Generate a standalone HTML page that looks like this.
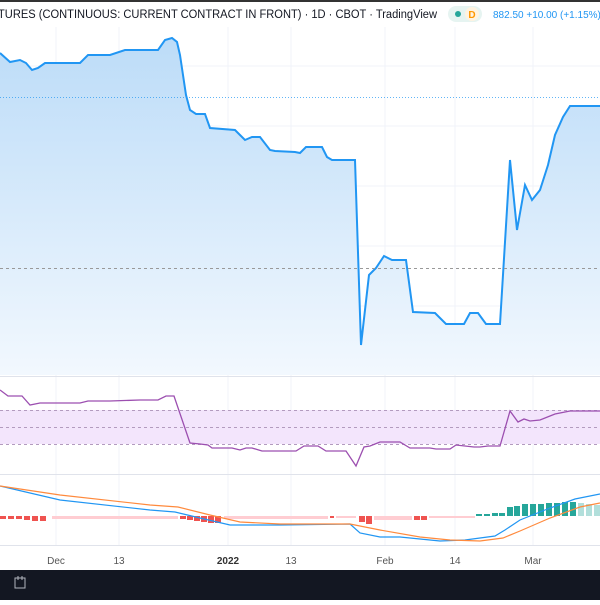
<!DOCTYPE html>
<html><head><meta charset="utf-8"><style>
body{margin:0;width:600px;height:600px;overflow:hidden;background:#fff;font-family:"Liberation Sans",sans-serif}
</style></head><body>
<svg width="600" height="600" xmlns="http://www.w3.org/2000/svg" font-family="Liberation Sans, sans-serif">
<defs><linearGradient id="g" x1="0" y1="0" x2="0" y2="1">
<stop offset="0" stop-color="#bcdcf8"/><stop offset="1" stop-color="#f2f8fe"/></linearGradient></defs>
<rect width="600" height="600" fill="#fff"/>
<rect width="600" height="2" fill="#333"/>
<g stroke="#f0f3fa" stroke-width="1">
<line x1="56" y1="27" x2="56" y2="545"/><line x1="119" y1="27" x2="119" y2="545"/><line x1="228" y1="27" x2="228" y2="545"/><line x1="291" y1="27" x2="291" y2="545"/><line x1="385" y1="27" x2="385" y2="545"/><line x1="455" y1="27" x2="455" y2="545"/><line x1="533" y1="27" x2="533" y2="545"/>
<line x1="0" y1="66" x2="600" y2="66"/><line x1="0" y1="126" x2="600" y2="126"/><line x1="0" y1="186" x2="600" y2="186"/><line x1="0" y1="246" x2="600" y2="246"/><line x1="0" y1="306" x2="600" y2="306"/>
</g>
<path d="M0,53 L10,62 L20,60 L26,63 L32,70 L38,68 L45,63 L80,63 L88,55 L110,55 L125,50 L158,50 L165,40 L172,38 L177,42 L180,55 L186,95 L190,110 L196,114 L205,114 L210,128 L235,130 L240,135 L245,140 L252,137 L260,137 L270,150 L275,151 L295,152 L300,153 L306,147 L322,147 L327,157 L332,160 L355,160 L361,345 L369,275 L376,268 L384,256 L392,260 L406,260 L413,312 L435,313 L440,318 L446,324 L464,324 L470,313 L478,313 L486,324 L500,324 L510,160 L517,230 L525,185 L532,200 L540,190 L548,165 L555,135 L563,117 L570,106 L600,106 L600,375 L0,375 Z" fill="url(#g)"/>
<path d="M0,53 L10,62 L20,60 L26,63 L32,70 L38,68 L45,63 L80,63 L88,55 L110,55 L125,50 L158,50 L165,40 L172,38 L177,42 L180,55 L186,95 L190,110 L196,114 L205,114 L210,128 L235,130 L240,135 L245,140 L252,137 L260,137 L270,150 L275,151 L295,152 L300,153 L306,147 L322,147 L327,157 L332,160 L355,160 L361,345 L369,275 L376,268 L384,256 L392,260 L406,260 L413,312 L435,313 L440,318 L446,324 L464,324 L470,313 L478,313 L486,324 L500,324 L510,160 L517,230 L525,185 L532,200 L540,190 L548,165 L555,135 L563,117 L570,106 L600,106" fill="none" stroke="#2196f3" stroke-width="2"/>
<line x1="0" y1="97.5" x2="600" y2="97.5" stroke="#2196f3" stroke-width="1" stroke-dasharray="1,2" opacity="0.7"/>
<line x1="0" y1="268.5" x2="600" y2="268.5" stroke="#999" stroke-width="1" stroke-dasharray="3,3"/>
<rect x="0" y="376" width="600" height="1" fill="#e0e3eb"/>
<rect x="0" y="410" width="600" height="34" fill="#f3e5fc"/>
<g stroke="#b39bbf" stroke-dasharray="3,3" stroke-width="1"><line x1="0" y1="410.5" x2="600" y2="410.5"/><line x1="0" y1="427.5" x2="600" y2="427.5"/><line x1="0" y1="444.5" x2="600" y2="444.5"/></g>
<path d="M0,390 L8,396 L22,396 L30,405 L40,403 L80,403 L88,401 L110,401 L140,400 L158,400 L166,396 L174,396 L190,443 L200,444 L208,445 L212,448 L232,448 L240,450 L246,448 L252,448 L262,451 L296,451 L304,446 L318,446 L326,451 L346,451 L356,466 L364,447 L370,446 L380,442 L400,442 L410,448 L430,448 L436,449 L450,449 L456,445 L474,447 L480,447 L488,446 L500,446 L510,411 L518,422 L524,419 L530,421 L540,420 L555,414 L570,411 L600,411" fill="none" stroke="#9c4fb0" stroke-width="1.3"/>
<rect x="0" y="474" width="600" height="1" fill="#e0e3eb"/>
<g fill="#ef5350">
<rect x="0" y="516" width="6" height="3"/><rect x="8" y="516" width="6" height="3"/><rect x="16" y="516" width="6" height="3"/><rect x="24" y="516" width="6" height="4"/><rect x="32" y="516" width="6" height="5"/><rect x="40" y="516" width="6" height="5"/>
<rect x="180" y="516" width="6" height="3"/><rect x="187" y="516" width="6" height="4"/><rect x="194" y="516" width="6" height="5"/><rect x="201" y="516" width="6" height="6"/><rect x="208" y="516" width="6" height="7"/><rect x="215" y="516" width="6" height="7"/>
<rect x="359" y="516" width="6" height="6"/><rect x="366" y="516" width="6" height="8"/>
<rect x="414" y="516" width="6" height="4"/><rect x="421" y="516" width="6" height="4"/><rect x="330" y="516" width="4" height="2"/>
</g>
<g fill="#ffcdd2"><rect x="52" y="516" width="126" height="3"/><rect x="224" y="516" width="104" height="3"/><rect x="336" y="516" width="20" height="2"/><rect x="374" y="516" width="38" height="4"/><rect x="429" y="516" width="46" height="2"/></g>
<g fill="#26a69a">
<rect x="476" y="514" width="6" height="2"/><rect x="484" y="514" width="6" height="2"/><rect x="492" y="513" width="6" height="3"/><rect x="499" y="513" width="6" height="3"/>
<rect x="507" y="507" width="6" height="9"/><rect x="514" y="506" width="6" height="10"/><rect x="522" y="504" width="6" height="12"/><rect x="530" y="504" width="6" height="12"/><rect x="538" y="504" width="6" height="12"/><rect x="546" y="503" width="6" height="13"/><rect x="554" y="503" width="6" height="13"/><rect x="562" y="502" width="6" height="14"/><rect x="570" y="502" width="6" height="14"/>
</g>
<g fill="#b2dfdb"><rect x="578" y="503" width="6" height="13"/><rect x="586" y="504" width="6" height="12"/><rect x="594" y="505" width="6" height="11"/></g>
<path d="M0,486 L60,500 L150,510 L175,512 L200,518 L230,525 L280,525 L350,524 L360,533 L380,537 L400,537 L440,541 L465,540 L495,536 L505,530 L520,520 L550,508 L575,499 L600,494" fill="none" stroke="#2196f3" stroke-width="1.2"/>
<path d="M0,486 L60,495 L150,505 L178,507 L210,515 L240,522 L280,524 L350,524 L380,530 L420,537 L450,540 L480,541 L503,538 L520,531 L550,518 L580,507 L600,503" fill="none" stroke="#ff8a3d" stroke-width="1.2"/>
<rect x="0" y="545" width="600" height="1" fill="#e0e3eb"/>
<g font-size="10" fill="#555" text-anchor="middle"><text x="56" y="564">Dec</text><text x="119" y="564">13</text><text x="228" y="564" font-weight="bold" fill="#333">2022</text><text x="291" y="564">13</text><text x="385" y="564">Feb</text><text x="455" y="564">14</text><text x="533" y="564">Mar</text></g>
<rect x="0" y="570" width="600" height="30" fill="#131722"/>
<g stroke="#b2b5be" stroke-width="1" fill="none"><rect x="15" y="578" width="10" height="10"/><line x1="18" y1="576" x2="18" y2="580"/><line x1="22" y1="576" x2="22" y2="580"/></g>
<rect x="0" y="2" width="600" height="25" fill="#fff"/>
<text x="-2" y="18" font-size="11.5" fill="#131722" textLength="439" lengthAdjust="spacingAndGlyphs">TURES (CONTINUOUS: CURRENT CONTRACT IN FRONT) · 1D · CBOT · TradingView</text>
<rect x="448" y="6" width="34" height="16" rx="8" fill="#e6f4f1"/>
<circle cx="458" cy="14" r="3" fill="#26a69a"/>
<circle cx="472" cy="14" r="7" fill="#fff3e0"/>
<text x="472" y="18" font-size="10" fill="#ff9800" text-anchor="middle" font-weight="bold">D</text>
<text x="493" y="18" font-size="10" fill="#2196f3">882.50 +10.00 (+1.15%)</text>
</svg>
</body></html>
